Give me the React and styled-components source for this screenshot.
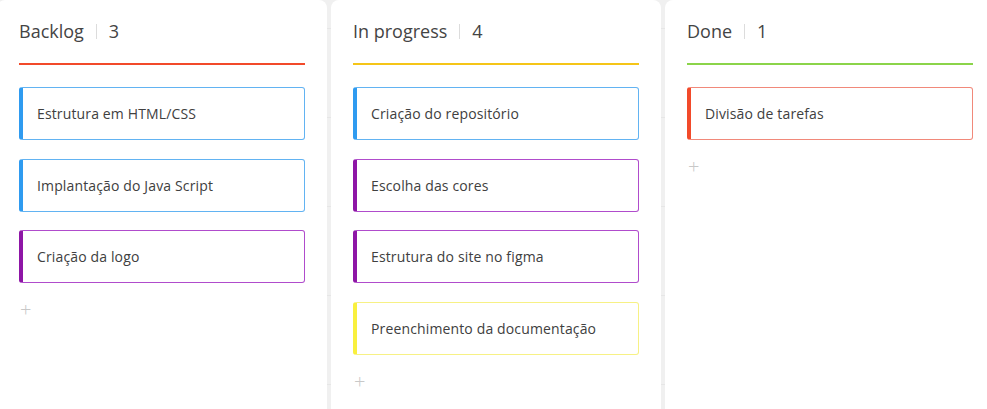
import React from "react";
import styled, { createGlobalStyle } from "styled-components";

const Global = createGlobalStyle`
  html, body { margin: 0; padding: 0; height: 100%; overflow: hidden; }
  body {
    font-family: "Open Sans", "Noto Sans", sans-serif;
    background-color: #f0f0f0;
    background-image: repeating-linear-gradient(
      to bottom,
      transparent 0px,
      transparent 28px,
      #e6e6e6 28px,
      #e6e6e6 29px,
      transparent 29px,
      transparent 89px
    );
  }
  #root { height: 100%; }
`;

const Board = styled.div`
  display: flex;
  gap: 4px;
  height: 100vh;
  margin-left: -3px;
`;

const Column = styled.section`
  flex: 0 0 330px;
  background: #fff;
  border-radius: 8px 8px 0 0;
  padding: 19px 22px 0;
  box-sizing: border-box;
  display: flex;
  flex-direction: column;
`;

const Header = styled.header`
  display: flex;
  align-items: center;
  height: 24px;
  font-size: 18px;
  color: #444;
  padding-bottom: 20px;
  border-bottom: 2px solid ${(p) => p.$color};
  margin-bottom: 22px;
`;

const Sep = styled.span`
  display: inline-block;
  width: 1px;
  height: 15px;
  background: #dcdcdc;
  margin: 0 12px 0 12px;
`;

const Cards = styled.div`
  display: flex;
  flex-direction: column;
  gap: 18.5px;
`;

const Card = styled.div`
  box-sizing: border-box;
  height: 53px;
  border: 1px solid ${(p) => p.$border};
  border-left: 4px solid ${(p) => p.$bar};
  border-radius: 3px;
  display: flex;
  align-items: center;
  padding-left: 14px;
  font-size: 14px;
  letter-spacing: 0.14px;
  color: #404040;
`;

const Add = styled.div`
  margin-top: 17px;
  margin-left: 1px;
  font-size: 20px;
  line-height: 20px;
  font-weight: 300;
  color: #c8c8c8;
`;

const kinds = {
  blue: { bar: "#2f9bf0", border: "#62b3f2" },
  purple: { bar: "#8e16a6", border: "#b04ccc" },
  yellow: { bar: "#f9f03e", border: "#f7f185" },
  red: { bar: "#f24a2a", border: "#f1897a" },
};

const columns = [
  {
    title: "Backlog",
    color: "#f24a2a",
    cards: [
      ["Estrutura em HTML/CSS", "blue"],
      ["Implantação do Java Script", "blue"],
      ["Criação da logo", "purple"],
    ],
  },
  {
    title: "In progress",
    color: "#f5c518",
    cards: [
      ["Criação do repositório", "blue"],
      ["Escolha das cores", "purple"],
      ["Estrutura do site no figma", "purple"],
      ["Preenchimento da documentação", "yellow"],
    ],
  },
  {
    title: "Done",
    color: "#8bd44a",
    cards: [["Divisão de tarefas", "red"]],
  },
];

export default function App() {
  return (
    <>
      <Global />
      <Board>
        {columns.map((c) => (
          <Column key={c.title}>
            <Header $color={c.color}>
              <span>{c.title}</span>
              <Sep />
              <span>{c.cards.length}</span>
            </Header>
            <Cards>
              {c.cards.map(([t, k]) => (
                <Card key={t} $bar={kinds[k].bar} $border={kinds[k].border}>
                  {t}
                </Card>
              ))}
            </Cards>
            <Add>+</Add>
          </Column>
        ))}
      </Board>
    </>
  );
}
